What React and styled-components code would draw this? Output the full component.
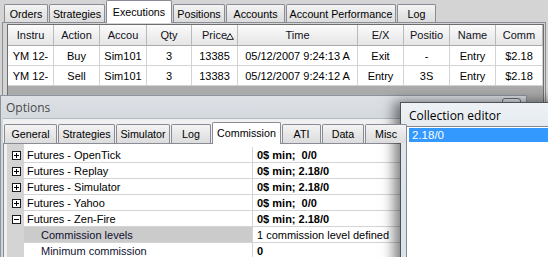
import React from "react";
import styled, { createGlobalStyle } from "styled-components";

const Global = createGlobalStyle`
  html, body { margin: 0; padding: 0; background: #d4d4d4; }
  body { font-family: "Liberation Sans", Arial, sans-serif; font-size: 11px; }
  * { box-sizing: border-box; }
`;

const Desktop = styled.div`
  position: relative;
  width: 548px;
  height: 257px;
  overflow: hidden;
  background: #d4d4d4;
  font-family: "Liberation Sans", Arial, sans-serif;
  font-size: 11px;
  color: #000;
`;

const MainWindow = styled.div`
  display: flex;
  flex-direction: column;
  height: 257px;
`;

const TabStrip = styled.div`
  display: flex;
  align-items: flex-start;
  gap: 1px;
  height: ${(p) => p.$h}px;
  padding-left: ${(p) => p.$indent}px;
  flex: none;
`;

const Tab = styled.div`
  position: relative;
  z-index: ${(p) => (p.$active ? 2 : 1)};
  width: ${(p) => p.$w}px;
  height: ${(p) => (p.$active ? p.$h + 1 : p.$h - p.$top)}px;
  margin-top: ${(p) => (p.$active ? 0 : p.$top)}px;
  display: flex;
  align-items: center;
  justify-content: center;
  padding-bottom: ${(p) => (p.$active ? 1 : 0)}px;
  border: 1px solid #898c95;
  border-bottom: none;
  border-radius: 2px 2px 0 0;
  background: ${(p) =>
    p.$active ? "#ffffff" : "linear-gradient(#f4f4f4, #e7e7e7 50%, #dcdcdc)"};
  font-size: 10.7px;
  white-space: nowrap;
  overflow: hidden;
`;

const MainPage = styled.div`
  flex: 1;
  min-height: 0;
  display: flex;
  flex-direction: column;
  margin: 0 2px;
  border: 1px solid #898c95;
  padding: 1px 1px 0 4px;
  background: #d4d4d4;
`;

const DataGrid = styled.div`
  flex: 1;
  border: 1px solid #6e6e6e;
  background: #ababab;
`;

const GridRow = styled.div`
  display: grid;
  grid-template-columns: 46px 46px 47px 45px 46px 120px 46px 46px 46px 47px;
`;

const HeaderCell = styled.div`
  position: relative;
  height: 21px;
  display: flex;
  align-items: center;
  justify-content: center;
  background: linear-gradient(#fbfbfb, #efefef 55%, #e6e6e6);
  border-right: 1px solid #b9b9b9;
  border-bottom: 1px solid #a9a9a9;
  color: #101020;
  white-space: nowrap;
  overflow: hidden;
`;

const SortGlyph = styled.svg`
  position: absolute;
  left: 34px;
  top: 8px;
`;

const Cell = styled.div`
  height: 20px;
  display: flex;
  align-items: center;
  justify-content: center;
  background: #fff;
  border-right: 1px solid #d3d3d3;
  border-bottom: 1px solid #d3d3d3;
  white-space: nowrap;
  overflow: hidden;
`;

const Window = styled.div`
  position: absolute;
  left: ${(p) => p.$x}px;
  top: ${(p) => p.$y}px;
  width: ${(p) => p.$w}px;
  height: ${(p) => p.$hgt}px;
  display: flex;
  flex-direction: column;
  border: 1px solid ${(p) => (p.$active ? "#4f5358" : "#8e959d")};
  padding: 0 2px 0 ${(p) => p.$padL}px;
  background: ${(p) =>
    p.$active
      ? "linear-gradient(#eef2f6, #dfe6ec 40px, #d9e2ea)"
      : "linear-gradient(#dde1e6, #d1d6dc 30px, #cfd4da)"};
  box-shadow: ${(p) =>
    p.$active ? "-3px 2px 12px 3px rgba(0,0,0,0.5)" : "none"};
`;

const TitleBar = styled.div`
  position: relative;
  height: ${(p) => p.$h}px;
  flex: none;
  display: flex;
  align-items: center;
  padding-left: ${(p) => p.$pad}px;
  padding-top: 1px;
  font-family: "Open Sans", "Noto Sans", sans-serif;
  font-size: 12px;
  color: ${(p) => (p.$active ? "#000" : "#4a4a4a")};
`;

const CloseButton = styled.div`
  position: absolute;
  right: 3px;
  top: 2px;
  width: 19px;
  height: 15px;
  border: 1px solid #6b6f75;
  border-radius: 3px;
  background: linear-gradient(#e8ebee, #c8cdd3);
`;

const ClientArea = styled.div`
  flex: 1;
  display: flex;
  flex-direction: column;
  background: #f0f0f0;
  padding-top: 3px;
  border-top: 1px solid #b4bac1;
`;

const OptionsPage = styled.div`
  flex: 1;
  border: 1px solid #898c95;
  padding: 0 0 0 3px;
  background: #f0f0f0;
`;

const PropGrid = styled.div`
  padding-top: 3px;
  background: linear-gradient(to right, #d4d4d4 17px, #ffffff 17px);
`;

const PropRow = styled.div`
  display: grid;
  grid-template-columns: 17px 229px 1fr;
  height: 16px;
`;

const Gutter = styled.div`
  background: #d4d4d4;
  display: flex;
  align-items: center;
  padding-left: 5px;
`;

const NameCell = styled.div`
  display: flex;
  align-items: center;
  padding-left: ${(p) => p.$indent}px;
  background: ${(p) => (p.$selected ? "#cbcbcb" : "#fff")};
  border-right: 1px solid #d4d4d4;
  border-bottom: 1px solid #d4d4d4;
  white-space: nowrap;
  color: ${(p) => (p.$child ? "#101030" : "#000")};
`;

const ValueCell = styled.div`
  display: flex;
  align-items: center;
  padding-left: 4px;
  background: #fff;
  border-bottom: 1px solid #d4d4d4;
  font-weight: ${(p) => (p.$bold ? 700 : 400)};
  white-space: pre;
`;

const ListBox = styled.div`
  flex: 1;
  border: 1px solid #828790;
  background: #fff;
  padding: 1px 0 0 2px;
`;

const ListItem = styled.div`
  height: 14px;
  display: flex;
  align-items: center;
  padding-left: 3px;
  background: #3399ff;
  color: #fff;
  font-size: 11.5px;
`;

function Expander({ open }) {
  return (
    <svg width="9" height="9" viewBox="0 0 9 9">
      <rect x="0.5" y="0.5" width="8" height="8" fill="#fff" stroke="#1a1a1a" />
      <line x1="2" y1="4.5" x2="7" y2="4.5" stroke="#000" />
      {!open && <line x1="4.5" y1="2" x2="4.5" y2="7" stroke="#000" />}
    </svg>
  );
}

const mainTabs = [
  ["Orders", 44],
  ["Strategies", 56],
  ["Executions", 66],
  ["Positions", 52],
  ["Accounts", 59],
  ["Account Performance", 110],
  ["Log", 39],
];

const optionTabs = [
  ["General", 53],
  ["Strategies", 57],
  ["Simulator", 54],
  ["Log", 40],
  ["Commission", 69],
  ["ATI", 39],
  ["Data", 42],
  ["Misc", 42],
];

const cols = ["Instru", "Action", "Accou", "Qty", "Price", "Time", "E/X", "Positio", "Name", "Comm"];

const rows = [
  ["YM 12-", "Buy", "Sim101", "3", "13385", "05/12/2007 9:24:13 A", "Exit", "-", "Entry", "$2.18"],
  ["YM 12-", "Sell", "Sim101", "3", "13383", "05/12/2007 9:24:12 A", "Entry", "3S", "Entry", "$2.18"],
];

const props = [
  { name: "Futures - OpenTick", value: "0$ min;  0/0", bold: true, exp: "plus" },
  { name: "Futures - Replay", value: "0$ min; 2.18/0", bold: true, exp: "plus" },
  { name: "Futures - Simulator", value: "0$ min; 2.18/0", bold: true, exp: "plus" },
  { name: "Futures - Yahoo", value: "0$ min;  0/0", bold: true, exp: "plus" },
  { name: "Futures - Zen-Fire", value: "0$ min; 2.18/0", bold: true, exp: "minus" },
  { name: "Commission levels", value: "1 commission level defined", bold: false, child: true, selected: true },
  { name: "Minimum commission", value: "0", bold: true, child: true },
];

export default function App() {
  return (
    <>
      <Global />
      <Desktop>
        <MainWindow>
          <TabStrip $h={22} $indent={4}>
            {mainTabs.map(([label, w]) => (
              <Tab key={label} $w={w} $h={22} $top={4} $active={label === "Executions"}>
                {label}
              </Tab>
            ))}
          </TabStrip>
          <MainPage>
            <DataGrid>
              <GridRow>
                {cols.map((c) => (
                  <HeaderCell key={c}>
                    {c}
                    {c === "Price" && (
                      <SortGlyph width="8" height="7" viewBox="0 0 8 7">
                        <polygon points="4,0.6 7.4,6.4 0.6,6.4" fill="#f2f2f2" stroke="#222" strokeWidth="1" />
                      </SortGlyph>
                    )}
                  </HeaderCell>
                ))}
              </GridRow>
              {rows.map((r, i) => (
                <GridRow key={i}>
                  {r.map((c, j) => (
                    <Cell key={j}>{c}</Cell>
                  ))}
                </GridRow>
              ))}
            </DataGrid>
          </MainPage>
        </MainWindow>

        <Window $x={0} $y={95} $w={527} $hgt={180} $padL={2}>
          <TitleBar $h={22} $pad={3}>
            Options
            <CloseButton />
          </TitleBar>
          <ClientArea>
            <TabStrip $h={21} $indent={1}>
              {optionTabs.map(([label, w]) => (
                <Tab key={label} $w={w} $h={21} $top={2} $active={label === "Commission"}>
                  {label}
                </Tab>
              ))}
            </TabStrip>
            <OptionsPage>
              <PropGrid>
                {props.map((p) => (
                  <PropRow key={p.name}>
                    <Gutter>{p.exp && <Expander open={p.exp === "minus"} />}</Gutter>
                    <NameCell $indent={p.child ? 17 : 3} $selected={p.selected} $child={p.child}>
                      {p.name}
                    </NameCell>
                    <ValueCell $bold={p.bold}>{p.value}</ValueCell>
                  </PropRow>
                ))}
              </PropGrid>
            </OptionsPage>
          </ClientArea>
        </Window>

        <Window $x={400} $y={102} $w={170} $hgt={170} $padL={5} $active>
          <TitleBar $h={23} $pad={3} $active>
            Collection editor
          </TitleBar>
          <ListBox>
            <ListItem>2.18/0</ListItem>
          </ListBox>
        </Window>
      </Desktop>
    </>
  );
}
